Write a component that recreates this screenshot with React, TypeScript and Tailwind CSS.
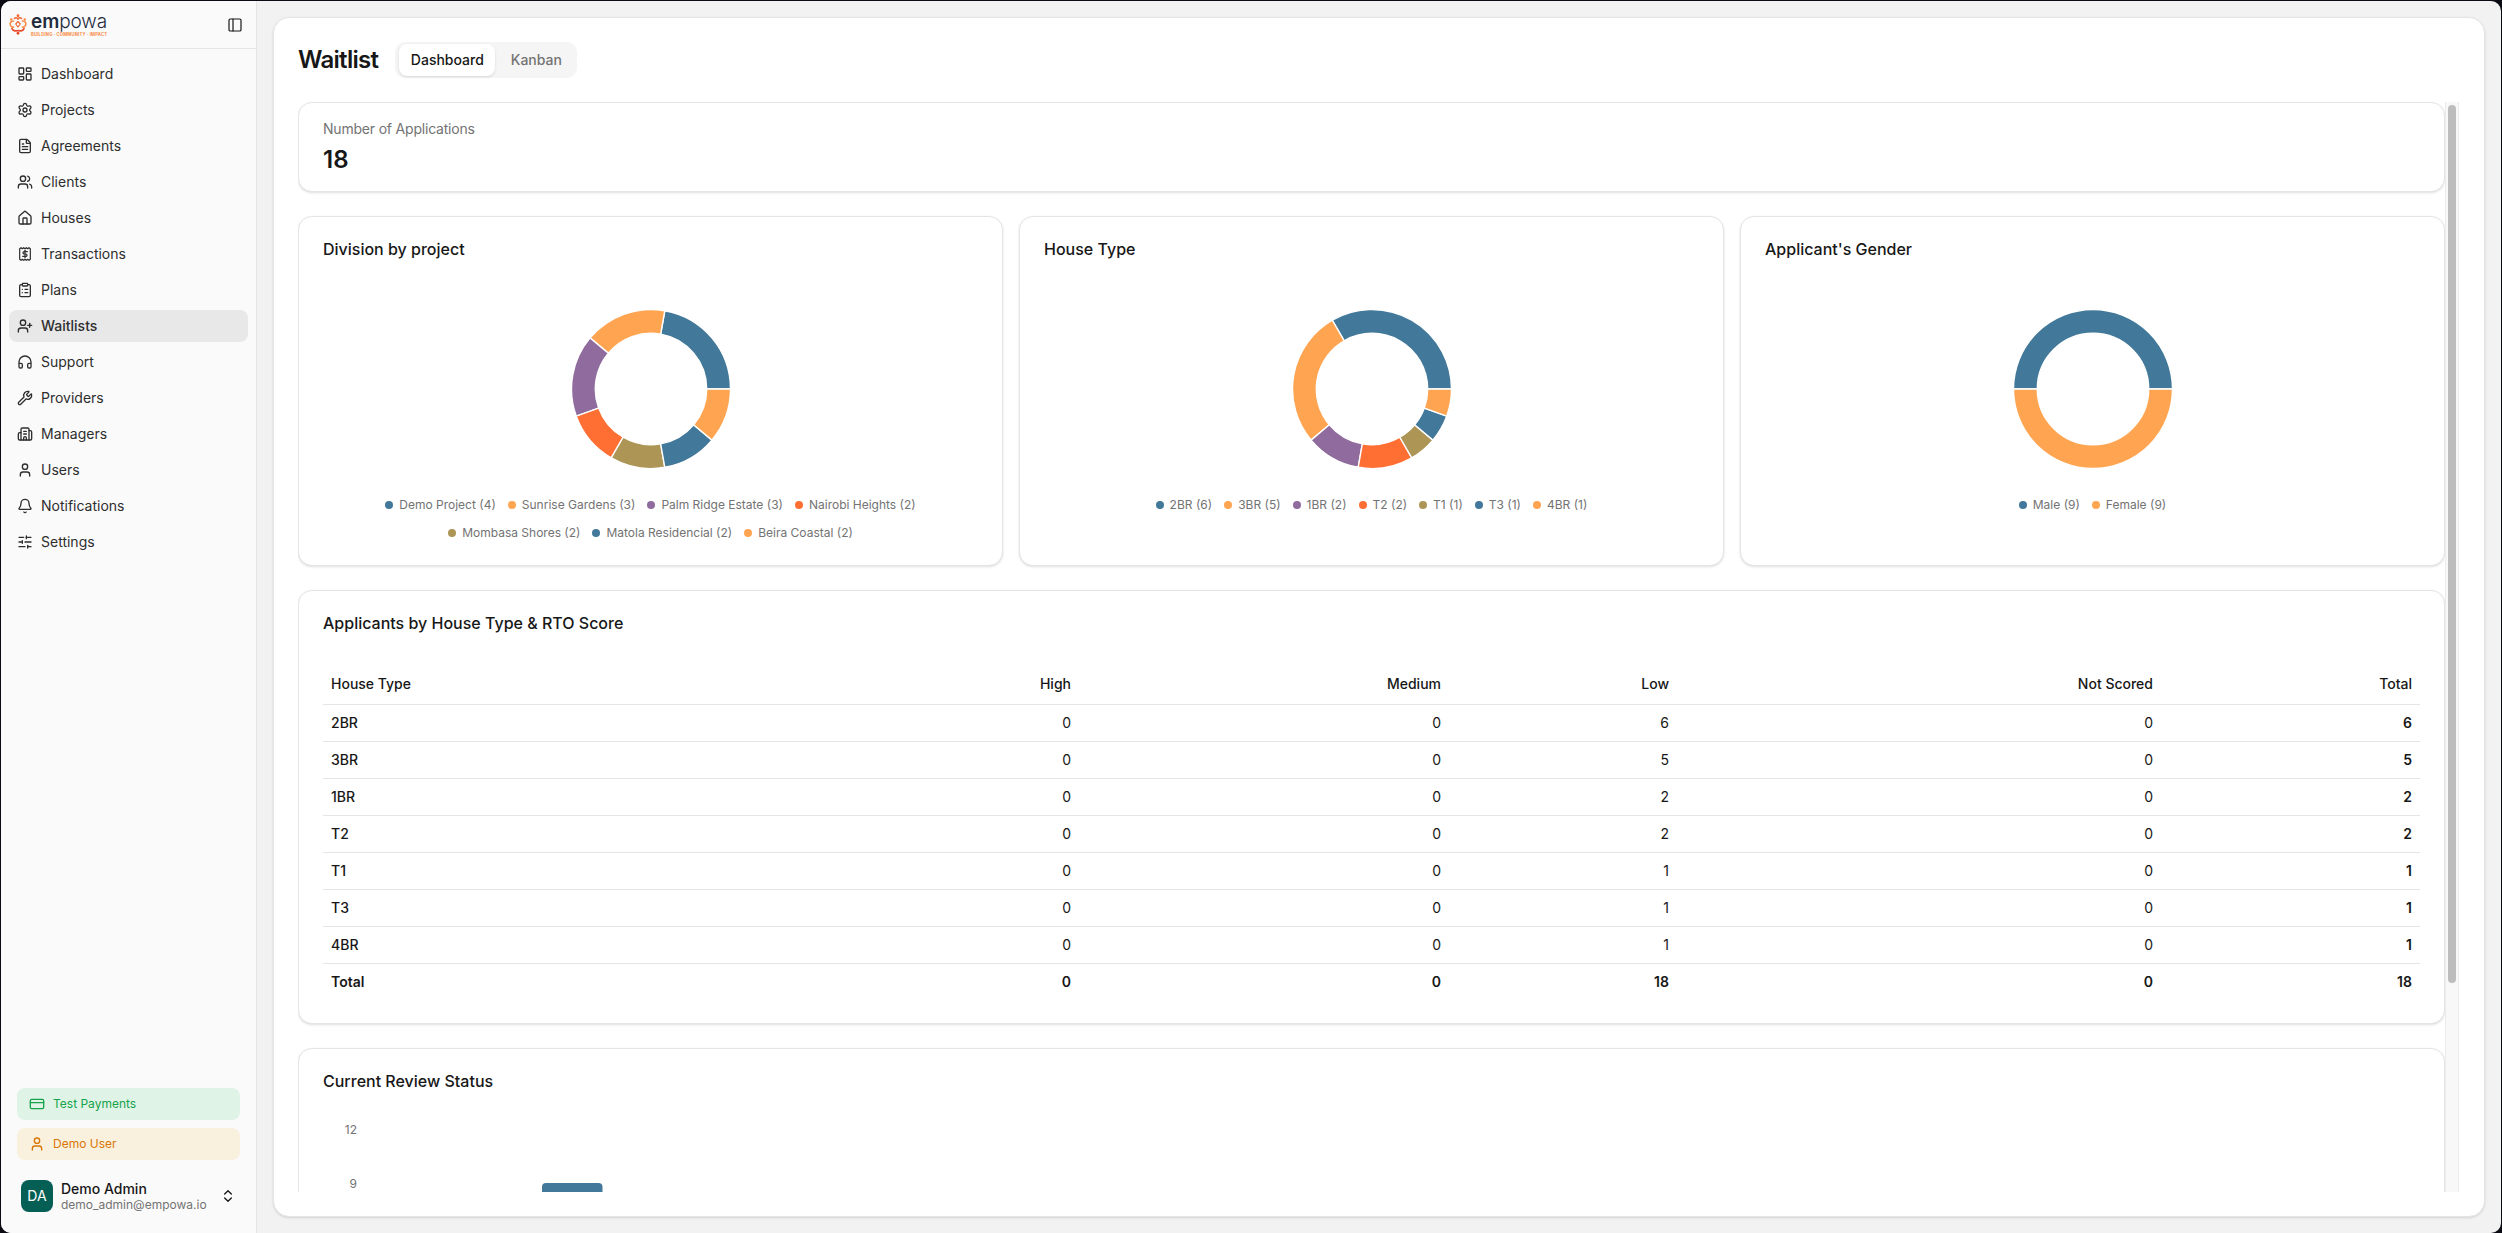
import React from "react";
import {
  LayoutDashboard, Settings, FileText, Users, House, ClipboardList, UserPlus, Headphones,
  Wrench, Building2, User, Bell, SlidersHorizontal, PanelLeft, CreditCard, ChevronsUpDown,
} from "lucide-react";

const BLUE = "#427899";
const ORANGE = "#ffa552";
const PURPLE = "#8f6b9e";
const RED = "#ff6f33";
const TAN = "#ad9556";

function TransactionsIcon({ className }: { className?: string }) {
  return (
    <svg viewBox="0 0 24 24" fill="none" stroke="currentColor" strokeWidth={2} strokeLinecap="round" strokeLinejoin="round" className={className}>
      <path d="M4 4l2-1.5 2 1.5 2-1.5 2 1.5 2-1.5 2 1.5 2-1.5 2 1.5v16l-2 1.5-2-1.5-2 1.5-2-1.5-2 1.5-2-1.5-2 1.5-2-1.5z" strokeWidth={1.8} />
      <path d="M12 6.5v11" strokeWidth={1.8} />
      <path d="M15.5 8.5h-4.75a1.75 1.75 0 0 0 0 3.5h2.5a1.75 1.75 0 0 1 0 3.5H8.5" strokeWidth={1.8} />
    </svg>
  );
}

const NAV: { label: string; Icon: React.ComponentType<{ className?: string }>; active?: boolean }[] = [
  { label: "Dashboard", Icon: LayoutDashboard },
  { label: "Projects", Icon: Settings },
  { label: "Agreements", Icon: FileText },
  { label: "Clients", Icon: Users },
  { label: "Houses", Icon: House },
  { label: "Transactions", Icon: TransactionsIcon },
  { label: "Plans", Icon: ClipboardList },
  { label: "Waitlists", Icon: UserPlus, active: true },
  { label: "Support", Icon: Headphones },
  { label: "Providers", Icon: Wrench },
  { label: "Managers", Icon: Building2 },
  { label: "Users", Icon: User },
  { label: "Notifications", Icon: Bell },
  { label: "Settings", Icon: SlidersHorizontal },
];

type Slice = { name: string; value: number; color: string };

const PROJECTS: Slice[] = [
  { name: "Demo Project", value: 4, color: BLUE },
  { name: "Sunrise Gardens", value: 3, color: ORANGE },
  { name: "Palm Ridge Estate", value: 3, color: PURPLE },
  { name: "Nairobi Heights", value: 2, color: RED },
  { name: "Mombasa Shores", value: 2, color: TAN },
  { name: "Matola Residencial", value: 2, color: BLUE },
  { name: "Beira Coastal", value: 2, color: ORANGE },
];
const HOUSES: Slice[] = [
  { name: "2BR", value: 6, color: BLUE },
  { name: "3BR", value: 5, color: ORANGE },
  { name: "1BR", value: 2, color: PURPLE },
  { name: "T2", value: 2, color: RED },
  { name: "T1", value: 1, color: TAN },
  { name: "T3", value: 1, color: BLUE },
  { name: "4BR", value: 1, color: ORANGE },
];
const GENDER: Slice[] = [
  { name: "Male", value: 9, color: BLUE },
  { name: "Female", value: 9, color: ORANGE },
];

function sectorPath(a0: number, a1: number, R: number, r: number, c: number) {
  const rad = (d: number) => (d * Math.PI) / 180;
  const p = (rr: number, a: number) => `${(c + rr * Math.cos(rad(a))).toFixed(3)} ${(c - rr * Math.sin(rad(a))).toFixed(3)}`;
  const large = a1 - a0 > 180 ? 1 : 0;
  return `M${p(R, a0)}A${R} ${R} 0 ${large} 0 ${p(R, a1)}L${p(r, a1)}A${r} ${r} 0 ${large} 1 ${p(r, a0)}Z`;
}

function Donut({ data }: { data: Slice[] }) {
  const total = data.reduce((s, d) => s + d.value, 0);
  let angle = 0;
  return (
    <svg viewBox="0 0 160 160" className="mx-auto block h-[160px] w-[160px]">
      {data.map((d) => {
        const start = angle;
        angle += (d.value / total) * 360;
        return <path key={d.name} d={sectorPath(start, angle, 79.5, 55.7, 80)} fill={d.color} stroke="#ffffff" strokeWidth={1.4} />;
      })}
    </svg>
  );
}

function PieCard({ title, data }: { title: string; data: Slice[] }) {
  return (
    <div className="h-[350px] rounded-[14px] border border-[#e5e5e5] bg-white px-6 pt-5 shadow-sm">
      <h3 className="text-base leading-6 font-medium text-[#171717]">{title}</h3>
      <div className="mt-[48px]">
        <Donut data={data} />
      </div>
      <div className="mt-[28px] flex flex-wrap justify-center gap-x-3 gap-y-3">
        {data.map((d) => (
          <div key={d.name} className="flex items-center gap-[6px] text-xs leading-4 text-[#737373]">
            <span className="h-2 w-2 rounded-full" style={{ backgroundColor: d.color }} />
            <span>
              {d.name} ({d.value})
            </span>
          </div>
        ))}
      </div>
    </div>
  );
}

const ROWS: [string, number, number, number, number, number][] = [
  ["2BR", 0, 0, 6, 0, 6],
  ["3BR", 0, 0, 5, 0, 5],
  ["1BR", 0, 0, 2, 0, 2],
  ["T2", 0, 0, 2, 0, 2],
  ["T1", 0, 0, 1, 0, 1],
  ["T3", 0, 0, 1, 0, 1],
  ["4BR", 0, 0, 1, 0, 1],
];

function LogoMark() {
  return (
    <svg viewBox="0 0 36 42" className="h-[21px] w-[18px] shrink-0" fill="none">
      <circle cx="18" cy="3.5" r="2.8" fill="#f26a35" />
      <circle cx="4.5" cy="11" r="2.5" fill="#f98a45" />
      <circle cx="31.5" cy="11" r="2.5" fill="#f98a45" />
      <circle cx="18" cy="38.5" r="2.8" fill="#e94a2c" />
      <path d="M11 9c2-2.5 5-1.5 7 1 2-2.5 5-3.5 7-1" stroke="#f26a35" strokeWidth="3.2" strokeLinecap="round" />
      <path d="M9 14c-5 0-8 4-6 8.5 1 3 4 4 6 3.5" stroke="#f98a45" strokeWidth="3.2" strokeLinecap="round" />
      <path d="M27 14c5 0 8 4 6 8.5-1 3-4 4-6 3.5" stroke="#f98a45" strokeWidth="3.2" strokeLinecap="round" />
      <path d="M6 29c1 4 7 6 12 4 5 2 11 0 12-4" stroke="#e94a2c" strokeWidth="3.2" strokeLinecap="round" />
      <path d="M18 15l4.5 5-4.5 6-4.5-6z" stroke="#f26a35" strokeWidth="2.4" strokeLinejoin="round" />
    </svg>
  );
}

function Sidebar() {
  return (
    <aside className="flex w-[256px] shrink-0 flex-col border-r border-[#e5e5e5] bg-[#fafafa]">
      <div className="flex h-[48px] shrink-0 items-center justify-between border-b border-[#e5e5e5] pr-[13px] pl-2">
        <div className="flex items-center gap-[4px]">
          <LogoMark />
          <div className="flex flex-col">
            <div className="text-[19px] leading-[20px] tracking-[-0.1px] text-[#1f2b3d]">
              <span className="font-semibold">em</span>
              <span className="font-light">powa</span>
            </div>
            <div className="text-[4.2px] leading-[5px] font-bold tracking-[0.2px] whitespace-nowrap text-[#f98a45]">BUILDING · COMMUNITY · IMPACT</div>
          </div>
        </div>
        <PanelLeft className="h-4 w-4 text-[#171717]" strokeWidth={1.8} />
      </div>
      <nav className="flex flex-col gap-1 px-2 pt-[9px]">
        {NAV.map(({ label, Icon, active }) => (
          <div key={label} className={`flex h-8 items-center gap-2 rounded-lg px-2 text-sm text-[#2e2e2e] ${active ? "bg-[#e8e8e8] font-medium" : ""}`}>
            <Icon className="h-4 w-4 shrink-0" />
            <span>{label}</span>
          </div>
        ))}
      </nav>
      <div className="mt-auto flex flex-col gap-2 px-4 pb-[21px]">
        <div className="flex h-8 items-center gap-2 rounded-lg bg-[#dff3e7] px-3 text-xs text-[#16a34a]">
          <CreditCard className="h-4 w-4 shrink-0" />
          <span>Test Payments</span>
        </div>
        <div className="flex h-8 items-center gap-2 rounded-lg bg-[#f9f0de] px-3 text-xs text-[#d97706]">
          <User className="h-4 w-4 shrink-0" />
          <span>Demo User</span>
        </div>
        <div className="mt-3 flex h-8 items-center gap-2 px-1">
          <div className="flex h-8 w-8 shrink-0 items-center justify-center rounded-lg bg-[#065f54] text-sm text-white">DA</div>
          <div className="min-w-0 flex-1 pt-[2px]">
            <div className="text-sm leading-4 font-medium text-[#171717]">Demo Admin</div>
            <div className="text-xs leading-4 text-[#737373]">demo_admin@empowa.io</div>
          </div>
          <ChevronsUpDown className="h-4 w-4 shrink-0 text-[#171717]" />
        </div>
      </div>
    </aside>
  );
}

function Scorecard() {
  return (
    <div className="h-[90px] rounded-[14px] border border-[#e5e5e5] bg-white px-6 py-4 shadow-sm">
      <div className="text-sm tracking-[-0.2px] text-[#737373]">Number of Applications</div>
      <div className="mt-[5px] text-2xl font-semibold text-[#171717]">18</div>
    </div>
  );
}

function ScoreTable() {
  const head = ["High", "Medium", "Low", "Not Scored", "Total"];
  return (
    <div className="h-[434px] rounded-[14px] border border-[#e5e5e5] bg-white px-6 pt-5 shadow-sm">
      <h3 className="text-base leading-6 font-medium text-[#171717]">Applicants by House Type &amp; RTO Score</h3>
      <table className="mt-[29px] w-full table-fixed text-sm text-[#171717]">
        <colgroup>
          <col className="w-[500px]" />
          <col className="w-[256px]" />
          <col className="w-[370px]" />
          <col className="w-[228px]" />
          <col className="w-[484px]" />
          <col className="w-[259px]" />
        </colgroup>
        <thead>
          <tr className="h-10 border-b border-[#e5e5e5]">
            <th className="px-2 text-left font-medium">House Type</th>
            {head.map((h) => (
              <th key={h} className="px-2 text-right font-medium">
                {h}
              </th>
            ))}
          </tr>
        </thead>
        <tbody>
          {ROWS.map(([name, a, b, c, d, t]) => (
            <tr key={name} className="h-[37px] border-b border-[#e5e5e5]">
              <td className="px-2 font-medium">{name}</td>
              <td className="px-2 text-right">{a}</td>
              <td className="px-2 text-right">{b}</td>
              <td className="px-2 text-right">{c}</td>
              <td className="px-2 text-right">{d}</td>
              <td className="px-2 text-right font-semibold">{t}</td>
            </tr>
          ))}
          <tr className="h-[37px] font-semibold">
            <td className="px-2">Total</td>
            <td className="px-2 text-right">0</td>
            <td className="px-2 text-right">0</td>
            <td className="px-2 text-right">18</td>
            <td className="px-2 text-right">0</td>
            <td className="px-2 text-right">18</td>
          </tr>
        </tbody>
      </table>
    </div>
  );
}

function ReviewChart() {
  return (
    <div className="h-[400px] rounded-[14px] border border-[#e5e5e5] bg-white px-6 pt-5 shadow-sm">
      <h3 className="text-base leading-6 font-medium text-[#171717]">Current Review Status</h3>
      <svg viewBox="0 0 400 200" className="mt-[12px] block h-[200px] w-[400px]">
        <text x="34" y="28.5" textAnchor="end" fontSize="12" fill="#737373" fontFamily="Inter, sans-serif">12</text>
        <text x="34" y="83" textAnchor="end" fontSize="12" fill="#737373" fontFamily="Inter, sans-serif">9</text>
        <path d="M219 200V82a4 4 0 0 1 4-4h52.5a4 4 0 0 1 4 4V200z" fill={BLUE} />
      </svg>
    </div>
  );
}

export default function App() {
  return (
    <div className="h-screen w-full overflow-hidden bg-[#0b0b14] pt-px pr-px pl-px font-[family-name:Inter,sans-serif]">
      <div className="flex h-full overflow-hidden rounded-[10px] bg-[#f2f2f2]">
        <Sidebar />
        <main className="min-w-0 flex-1 p-4">
          <div className="flex h-full flex-col rounded-[16px] border border-[#e5e5e5] bg-white pt-6 pr-[25px] pb-6 pl-6 shadow-sm">
            <div className="flex h-9 shrink-0 items-center gap-[17px]">
              <h1 className="text-2xl font-semibold tracking-[-0.7px] text-[#171717]">Waitlist</h1>
              <div className="flex h-9 items-center rounded-[10px] bg-[#f5f5f5] pl-1">
                <div className="flex h-8 w-24 items-center justify-center rounded-lg bg-white text-sm font-medium text-[#171717] shadow-sm">Dashboard</div>
                <div className="flex h-8 w-[82px] items-center justify-center text-sm font-medium text-[#737373]">Kanban</div>
              </div>
            </div>
            <div className="mt-6 flex min-h-0 flex-1">
              <div className="min-w-0 flex-1 overflow-hidden">
                <div className="flex flex-col gap-6">
                  <Scorecard />
                  <div className="grid grid-cols-3 gap-4">
                    <PieCard title="Division by project" data={PROJECTS} />
                    <PieCard title="House Type" data={HOUSES} />
                    <PieCard title="Applicant's Gender" data={GENDER} />
                  </div>
                  <ScoreTable />
                  <ReviewChart />
                </div>
              </div>
              <div className="w-[14px] shrink-0 border-x border-[#ececec] bg-[#f8f8f8] pt-[3px]">
                <div className="mx-auto h-[878px] w-2 rounded bg-[#bdbdbd]" />
              </div>
            </div>
          </div>
        </main>
      </div>
    </div>
  );
}
